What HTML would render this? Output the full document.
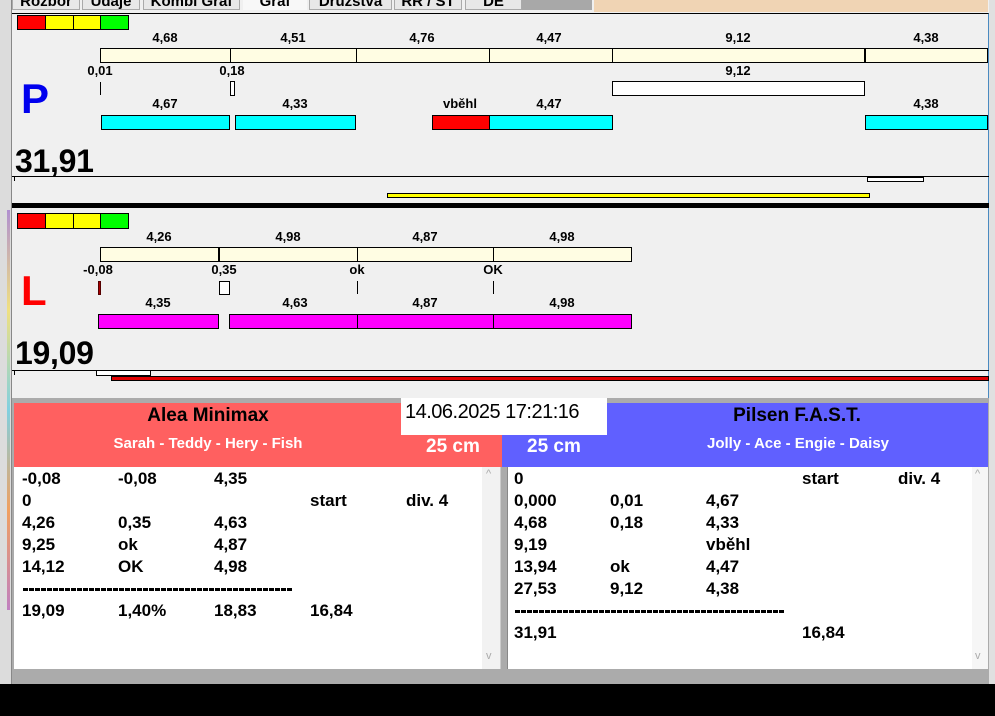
<!DOCTYPE html>
<html><head><meta charset="utf-8"><style>
*{margin:0;padding:0;box-sizing:border-box}
body{width:995px;height:716px;overflow:hidden;background:#f0f0f0;position:relative;font-family:"Liberation Sans",Arial,sans-serif;font-weight:bold;color:#000}
div{position:absolute}
.t{font-size:13px;line-height:14px;transform:translateX(-50%);white-space:nowrap}
.b{border:1px solid #000}
.y{background:#fffde3}
.c{background:#00ffff}
.m{background:#ff00ff}
.tab{top:-6px;height:16px;background:#e8e8e8;border:1px solid #aaa;font-size:15px;line-height:14px;text-align:center;overflow:hidden;font-weight:bold}
.row{font-size:17px;line-height:22px;white-space:nowrap}
.dash{height:3px;background:repeating-linear-gradient(90deg,#000 0 5px,transparent 5px 6px)}
</style></head><body>
<div style="left:0;top:0;width:12px;height:684px;background:#dcdcdc;border-right:1px solid #888"></div>
<div style="left:7px;top:210px;width:3px;height:400px;background:linear-gradient(#b08fd0,#f0e080,#80d0e0,#f0a060,#c080c0)"></div>
<div class="tab" style="left:12px;width:68px">Rozbor</div>
<div class="tab" style="left:82px;width:58px">Údaje</div>
<div class="tab" style="left:143px;width:97px">Kombi Graf</div>
<div class="tab" style="left:243px;width:64px;background:#f8f8f8;border-color:#f8f8f8">Graf</div>
<div class="tab" style="left:309px;width:83px">Družstva</div>
<div class="tab" style="left:394px;width:68px">RR / ST</div>
<div class="tab" style="left:465px;width:57px">DE</div>
<div style="left:522px;top:0;width:70px;height:10px;background:#a8a8a8"></div>
<div style="left:594px;top:0;width:394px;height:12px;background:#f0d4b4"></div>
<div style="left:12px;top:13px;width:977px;height:386px;background:#f0f0f0;border-top:1px solid #000;border-right:1px solid #4a8ac0"></div>
<div style="left:989px;top:0;width:6px;height:684px;background:#e0e0e0"></div>

<div class="b" style="left:17px;top:15px;width:29px;height:15px;background:#f00"></div>
<div class="b" style="left:45px;top:15px;width:29px;height:15px;background:#ff0"></div>
<div class="b" style="left:73px;top:15px;width:28px;height:15px;background:#ff0"></div>
<div class="b" style="left:100px;top:15px;width:29px;height:15px;background:#0f0"></div>

<div class="t" style="left:165px;top:31px">4,68</div>
<div class="t" style="left:293px;top:31px">4,51</div>
<div class="t" style="left:422px;top:31px">4,76</div>
<div class="t" style="left:549px;top:31px">4,47</div>
<div class="t" style="left:738px;top:31px">9,12</div>
<div class="t" style="left:926px;top:31px">4,38</div>
<div class="b y" style="left:100px;top:48px;width:131px;height:15px"></div>
<div class="b y" style="left:230px;top:48px;width:127px;height:15px"></div>
<div class="b y" style="left:356px;top:48px;width:134px;height:15px"></div>
<div class="b y" style="left:489px;top:48px;width:124px;height:15px"></div>
<div class="b y" style="left:612px;top:48px;width:254px;height:15px;border-right-width:2px"></div>
<div class="b y" style="left:865px;top:48px;width:123px;height:15px"></div>

<div class="t" style="left:100px;top:64px">0,01</div>
<div class="t" style="left:232px;top:64px">0,18</div>
<div class="t" style="left:738px;top:64px">9,12</div>
<div style="left:100px;top:82px;width:1px;height:13px;background:#000"></div>
<div class="b" style="left:230px;top:81px;width:5px;height:15px;background:#fff"></div>
<div class="b" style="left:612px;top:81px;width:253px;height:15px;background:#fff"></div>

<div style="left:21px;top:76px;font-size:42px;line-height:46px;color:#0000ee">P</div>

<div class="t" style="left:165px;top:97px">4,67</div>
<div class="t" style="left:295px;top:97px">4,33</div>
<div class="t" style="left:460px;top:97px">vběhl</div>
<div class="t" style="left:549px;top:97px">4,47</div>
<div class="t" style="left:926px;top:97px">4,38</div>
<div class="b c" style="left:101px;top:115px;width:129px;height:15px"></div>
<div class="b c" style="left:235px;top:115px;width:121px;height:15px"></div>
<div class="b" style="left:432px;top:115px;width:58px;height:15px;background:#f00"></div>
<div class="b c" style="left:489px;top:115px;width:124px;height:15px"></div>
<div class="b c" style="left:865px;top:115px;width:123px;height:15px"></div>

<div style="left:15px;top:144px;font-size:32px;line-height:34px;letter-spacing:-0.3px">31,91</div>
<div style="left:12px;top:176px;width:977px;height:1px;background:#000"></div>
<div style="left:14px;top:176px;width:1px;height:5px;background:#000"></div>
<div class="b" style="left:867px;top:177px;width:57px;height:5px;background:#fff"></div>
<div class="b" style="left:387px;top:193px;width:483px;height:5px;background:#ff0"></div>
<div style="left:12px;top:203px;width:977px;height:5px;background:#000"></div>

<div class="b" style="left:17px;top:213px;width:29px;height:16px;background:#f00"></div>
<div class="b" style="left:45px;top:213px;width:29px;height:16px;background:#ff0"></div>
<div class="b" style="left:73px;top:213px;width:28px;height:16px;background:#ff0"></div>
<div class="b" style="left:100px;top:213px;width:29px;height:16px;background:#0f0"></div>

<div class="t" style="left:159px;top:230px">4,26</div>
<div class="t" style="left:288px;top:230px">4,98</div>
<div class="t" style="left:425px;top:230px">4,87</div>
<div class="t" style="left:562px;top:230px">4,98</div>
<div class="b y" style="left:100px;top:247px;width:120px;height:15px"></div>
<div class="b y" style="left:218px;top:247px;width:140px;height:15px;border-left-width:2px"></div>
<div class="b y" style="left:357px;top:247px;width:137px;height:15px"></div>
<div class="b y" style="left:493px;top:247px;width:139px;height:15px"></div>

<div class="t" style="left:98px;top:263px">-0,08</div>
<div class="t" style="left:224px;top:263px">0,35</div>
<div class="t" style="left:357px;top:263px">ok</div>
<div class="t" style="left:493px;top:263px">OK</div>
<div style="left:98px;top:281px;width:3px;height:14px;background:#a00;border:1px solid #500"></div>
<div class="b" style="left:219px;top:281px;width:11px;height:14px;background:#fff"></div>
<div style="left:357px;top:281px;width:1px;height:13px;background:#000"></div>
<div style="left:493px;top:281px;width:1px;height:13px;background:#000"></div>

<div style="left:21px;top:270px;font-size:42px;line-height:42px;color:#f00;font-weight:bold">L</div>

<div class="t" style="left:158px;top:296px">4,35</div>
<div class="t" style="left:295px;top:296px">4,63</div>
<div class="t" style="left:425px;top:296px">4,87</div>
<div class="t" style="left:562px;top:296px">4,98</div>
<div class="b m" style="left:98px;top:314px;width:121px;height:15px"></div>
<div class="b m" style="left:229px;top:314px;width:129px;height:15px"></div>
<div class="b m" style="left:357px;top:314px;width:137px;height:15px"></div>
<div class="b m" style="left:493px;top:314px;width:139px;height:15px"></div>

<div style="left:15px;top:336px;font-size:32px;line-height:34px;letter-spacing:-0.3px">19,09</div>
<div style="left:12px;top:370px;width:977px;height:1px;background:#000"></div>
<div style="left:14px;top:370px;width:1px;height:5px;background:#000"></div>
<div class="b" style="left:96px;top:370px;width:55px;height:6px;background:#fff"></div>
<div class="b" style="left:111px;top:376px;width:878px;height:5px;background:#e00000"></div>

<div style="left:12px;top:398px;width:977px;height:286px;background:#ababab"></div>
<div style="left:14px;top:403px;width:488px;height:64px;background:#ff6060"></div>
<div style="left:502px;top:403px;width:486px;height:64px;background:#6060ff"></div>
<div style="left:401px;top:398px;width:206px;height:37px;background:#fff"></div>
<div style="left:405px;top:400px;font-size:20px;line-height:24px;font-weight:normal;letter-spacing:-0.5px">14.06.2025 17:21:16</div>
<div class="t" style="left:208px;top:406px;font-size:19px;line-height:20px">Alea Minimax</div>
<div class="t" style="left:797px;top:406px;font-size:19px;line-height:20px">Pilsen F.A.S.T.</div>
<div class="t" style="left:208px;top:436px;font-size:15px;line-height:16px;color:#fff">Sarah - Teddy - Hery - Fish</div>
<div class="t" style="left:798px;top:436px;font-size:15px;line-height:16px;color:#fff">Jolly - Ace - Engie - Daisy</div>
<div style="left:426px;top:437px;font-size:19px;line-height:20px;color:#fff">25 cm</div>
<div style="left:527px;top:437px;font-size:19px;line-height:20px;color:#fff">25 cm</div>

<div style="left:14px;top:467px;width:487px;height:202px;background:#fff;border-right:1px solid #ccc"></div>
<div style="left:482px;top:467px;width:18px;height:202px;background:#f2f2f2"></div>
<div style="left:486px;top:468px;font-size:11px;color:#aaa;font-weight:normal">^</div>
<div style="left:486px;top:650px;font-size:11px;color:#aaa;font-weight:normal">v</div>
<div style="left:507px;top:467px;width:481px;height:202px;background:#fff;border-left:1px solid #888"></div>
<div style="left:972px;top:467px;width:16px;height:202px;background:#f6f6f6"></div>
<div style="left:975px;top:468px;font-size:11px;color:#aaa;font-weight:normal">^</div>
<div style="left:975px;top:650px;font-size:11px;color:#aaa;font-weight:normal">v</div>

<div class="row" style="left:22px;top:468px">-0,08</div><div class="row" style="left:118px;top:468px">-0,08</div><div class="row" style="left:214px;top:468px">4,35</div>
<div class="row" style="left:22px;top:490px">0</div><div class="row" style="left:310px;top:490px">start</div><div class="row" style="left:406px;top:490px">div. 4</div>
<div class="row" style="left:22px;top:512px">4,26</div><div class="row" style="left:118px;top:512px">0,35</div><div class="row" style="left:214px;top:512px">4,63</div>
<div class="row" style="left:22px;top:534px">9,25</div><div class="row" style="left:118px;top:534px">ok</div><div class="row" style="left:214px;top:534px">4,87</div>
<div class="row" style="left:22px;top:556px">14,12</div><div class="row" style="left:118px;top:556px">OK</div><div class="row" style="left:214px;top:556px">4,98</div>
<div class="dash" style="left:23px;top:588px;width:269px"></div>
<div class="row" style="left:22px;top:600px">19,09</div><div class="row" style="left:118px;top:600px">1,40%</div><div class="row" style="left:214px;top:600px">18,83</div><div class="row" style="left:310px;top:600px">16,84</div>

<div class="row" style="left:514px;top:468px">0</div><div class="row" style="left:802px;top:468px">start</div><div class="row" style="left:898px;top:468px">div. 4</div>
<div class="row" style="left:514px;top:490px">0,000</div><div class="row" style="left:610px;top:490px">0,01</div><div class="row" style="left:706px;top:490px">4,67</div>
<div class="row" style="left:514px;top:512px">4,68</div><div class="row" style="left:610px;top:512px">0,18</div><div class="row" style="left:706px;top:512px">4,33</div>
<div class="row" style="left:514px;top:534px">9,19</div><div class="row" style="left:706px;top:534px">vběhl</div>
<div class="row" style="left:514px;top:556px">13,94</div><div class="row" style="left:610px;top:556px">ok</div><div class="row" style="left:706px;top:556px">4,47</div>
<div class="row" style="left:514px;top:578px">27,53</div><div class="row" style="left:610px;top:578px">9,12</div><div class="row" style="left:706px;top:578px">4,38</div>
<div class="dash" style="left:515px;top:610px;width:269px"></div>
<div class="row" style="left:514px;top:622px">31,91</div><div class="row" style="left:802px;top:622px">16,84</div>

<div style="left:0;top:684px;width:995px;height:32px;background:#000"></div>
</body></html>
